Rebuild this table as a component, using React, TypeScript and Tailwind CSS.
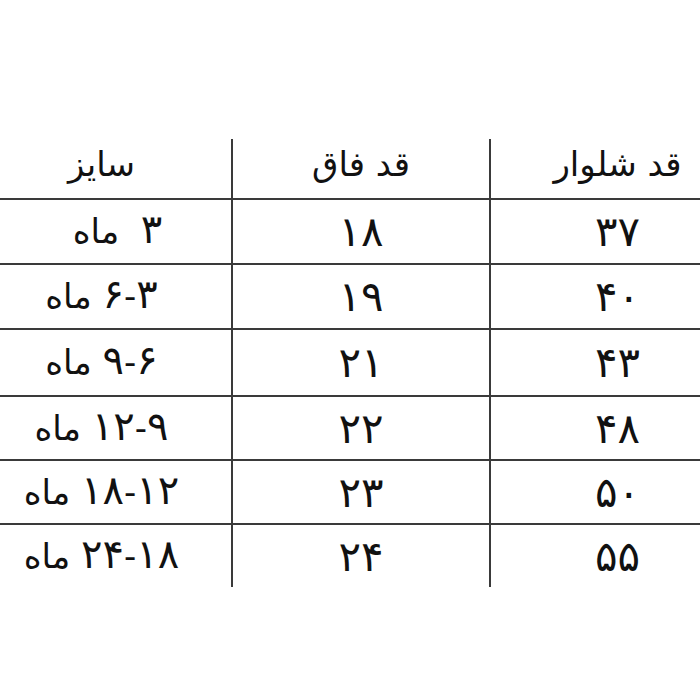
import React from "react";

const rows: { h: string; d: string[]; b: string; c: string; extra?: string; last?: boolean }[] = [
  { h: "h-[65px]", d: ["۳"], b: "۱۸", c: "۳۷", extra: "pl-[32px]" },
  { h: "h-[65px]", d: ["۶", "۳"], b: "۱۹", c: "۴۰" },
  { h: "h-[67px]", d: ["۹", "۶"], b: "۲۱", c: "۴۳" },
  { h: "h-[64px]", d: ["۱۲", "۹"], b: "۲۲", c: "۴۸" },
  { h: "h-[64px]", d: ["۱۸", "۱۲"], b: "۲۳", c: "۵۰" },
  { h: "h-[62px]", d: ["۲۴", "۱۸"], b: "۲۴", c: "۵۵", last: true },
];

export default function App() {
  return (
    <div
      className="w-[700px] h-[700px] bg-white text-[#111] overflow-hidden"
      style={{ fontFamily: '"DejaVu Sans", sans-serif' }}
    >
      <div className="h-[139px]" />
      <div className="flex h-[61px] border-b-2 border-[#3a3a3a] text-[34px]">
        <div className="w-[233px] border-r-2 border-[#3a3a3a] flex items-center justify-center pr-[28px] pb-[8px]" dir="rtl">
          سایز
        </div>
        <div className="w-[258px] border-r-2 border-[#3a3a3a] flex items-center justify-center pb-[8px]" dir="rtl">
          قد فاق
        </div>
        <div className="flex-1 flex items-center justify-center pl-[44px] pb-[8px]" dir="rtl">
          قد شلوار
        </div>
      </div>
      {rows.map((r, i) => (
        <div
          key={i}
          className={`flex ${r.h} ${r.last ? "" : "border-b-2 border-[#3a3a3a]"}`}
        >
          <div
            className={`w-[233px] border-r-2 border-[#3a3a3a] flex items-center justify-center pr-[28px] text-[34px] ${r.extra ?? ""}`}
            dir="rtl"
          >
            <span>
              <span dir="ltr" className="inline-block">
                <span className="text-[40px] leading-none">{r.d[0]}</span>
                {r.d.length > 1 ? (
                  <>
                    <span>-</span>
                    <span className="text-[40px] leading-none">{r.d[1]}</span>
                  </>
                ) : null}
              </span>
              {r.extra ? "\u00a0\u00a0" : " "}
              <span>ماه</span>
            </span>
          </div>
          <div className="w-[258px] border-r-2 border-[#3a3a3a] flex items-center justify-center text-[42px]" dir="rtl">
            {r.b}
          </div>
          <div className="flex-1 flex items-center justify-center pl-[44px] text-[42px]" dir="rtl">
            {r.c}
          </div>
        </div>
      ))}
    </div>
  );
}
